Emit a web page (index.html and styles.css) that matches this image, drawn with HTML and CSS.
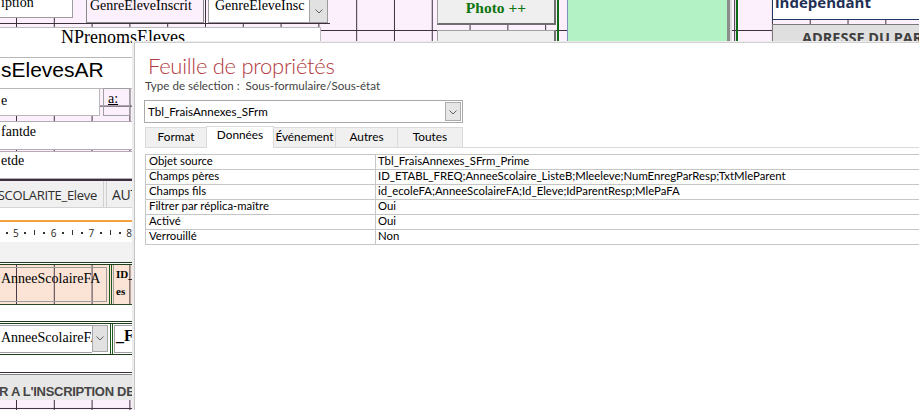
FILE: index.html
```html
<!DOCTYPE html>
<html lang="fr">
<head>
<meta charset="utf-8">
<title>Feuille de propriétés</title>
<link rel="stylesheet" href="styles.css">
</head>
<body>
<main class="designer">
  <div class="ctl txt-iption serif">iption</div>
  <div class="ctl rule-23"></div>
  <div class="ctl lbl-genre serif">GenreEleveInscrit</div>
  <div class="ctl cbo-genre serif"><span class="cbo-text">GenreEleveInsc</span><span class="dd"><svg viewBox="0 0 8 5" width="8" height="5"><path d="M0.5 0.5 L4 4 L7.5 0.5"/></svg></span></div>
  <div class="ctl txt-nprenoms serif">NPrenomsEleves</div>
  <div class="ctl btn-photo serif">Photo ++</div>
  <div class="ctl btn-fi serif">Fi</div>
  <div class="ctl vline-green v1"></div>
  <div class="ctl photo-frame"></div>
  <div class="ctl vline-green v2"></div>
  <div class="ctl txt-indep">independant</div>
  <div class="ctl lbl-adresse">ADRESSE DU PARENT</div>

  <div class="ctl txt-eleves">sElevesAR</div>
  <div class="ctl txt-e serif">e</div>
  <div class="ctl lbl-a serif"><u>a:</u></div>
  <div class="ctl txt-fantde serif">fantde</div>
  <div class="ctl txt-etde serif">etde</div>

  <div class="ctl lower">
    <div class="sect-line"></div>
    <div class="tabstrip">
      <span class="ttab first"><span>SCOLARITE_Eleve</span></span>
      <span class="ttab second"><span>AUTORISATION</span></span>
    </div>
    <div class="gap12"></div>
    <div class="orange"></div>
    <div class="ruler">
      <span class="rs"><i class="dot"></i></span>
      <span class="rs">5</span>
      <span class="rs"><i class="dot"></i></span>
      <span class="rs"><i class="tick"></i></span>
      <span class="rs"><i class="dot"></i></span>
      <span class="rs">6</span>
      <span class="rs"><i class="dot"></i></span>
      <span class="rs"><i class="tick"></i></span>
      <span class="rs"><i class="dot"></i></span>
      <span class="rs">7</span>
      <span class="rs"><i class="dot"></i></span>
      <span class="rs"><i class="tick"></i></span>
      <span class="rs"><i class="dot"></i></span>
      <span class="rs">8</span>
      <span class="rs"><i class="dot"></i></span>
    </div>
    <div class="ruler-pad"></div>
    <div class="sf-line"></div>
    <div class="sf-row1">
      <div class="sf-lbl serif">AnneeScolaireFA</div>
      <div class="sf-div"></div>
      <div class="sf-cell serif">ID_Fr<br>es</div>
    </div>
    <div class="sf-gap"></div>
    <div class="sf-line"></div>
    <div class="sf-row2">
      <div class="sf-cbo serif">AnneeScolaireFA</div>
      <div class="sf-dd"><svg viewBox="0 0 8 5" width="8" height="5"><path d="M0.5 0.5 L4 4 L7.5 0.5"/></svg></div>
      <div class="sf-div"></div>
      <div class="sf-cell2 serif">_Fr</div>
    </div>
    <div class="sf-gap2"></div>
    <div class="sf-bot"></div>
    <div class="bar-insc">R A L'INSCRIPTION DE</div>
  </div>
</main>

<section class="sheet">
  <h1 class="sheet-title">Feuille de propriétés</h1>
  <p class="sheet-sub">Type de sélection :&nbsp; Sous-formulaire/Sous-état</p>
  <div class="sel">
    <span class="sel-text">Tbl_FraisAnnexes_SFrm</span>
    <span class="sel-btn"><svg viewBox="0 0 8 5" width="8" height="5"><path d="M0.5 0.5 L4 4 L7.5 0.5"/></svg></span>
  </div>
  <div class="tabs">
    <span class="tab w-format">Format</span>
    <span class="tab on w-donnees">Données</span>
    <span class="tab w-event">Événement</span>
    <span class="tab w-autres">Autres</span>
    <span class="tab w-toutes">Toutes</span>
  </div>
  <div class="props">
    <div class="pn">Objet source</div><div class="pv">Tbl_FraisAnnexes_SFrm_Prime</div>
    <div class="pn">Champs pères</div><div class="pv">ID_ETABL_FREQ;AnneeScolaire_ListeB;Mleeleve;NumEnregParResp;TxtMleParent</div>
    <div class="pn">Champs fils</div><div class="pv">id_ecoleFA;AnneeScolaireFA;Id_Eleve;IdParentResp;MlePaFA</div>
    <div class="pn">Filtrer par réplica-maître</div><div class="pv">Oui</div>
    <div class="pn">Activé</div><div class="pv">Oui</div>
    <div class="pn">Verrouillé</div><div class="pv">Non</div>
  </div>
</section>
</body>
</html>
```

FILE: styles.css
```css
* { box-sizing: border-box; margin: 0; padding: 0; }
html, body { width: 919px; height: 410px; overflow: hidden; background: #fff; }
body { position: relative; }

.serif { font-family: "Liberation Serif", "Times New Roman", serif; }

/* ---------- design surface ---------- */
.designer {
  position: relative;
  width: 919px;
  height: 410px;
  overflow: hidden;
  background-color: #fdf0fd;
  background-image:
    linear-gradient(to right, #3d303d 0 1px, transparent 1px),
    linear-gradient(to bottom, #3d303d 0 1px, transparent 1px);
  background-size: 37.8px 37.8px;
  background-position: 16px 30px;
}
.ctl { position: absolute; white-space: nowrap; overflow: hidden; }

.txt-iption {
  left: -3px; top: -6px; width: 76px; height: 24px;
  background: #fff; border: 1px solid #9d9d9d;
  font-size: 14px; line-height: 16px; padding-left: 3px; color: #000;
}
.rule-23 { left: 0; top: 23px; width: 330px; height: 1px; background: #3d303d; }
.lbl-genre {
  left: 86px; top: -3px; width: 118px; height: 26px;
  border: 1px solid #8a8a8a; background: #fdf0fd;
  font-size: 14px; line-height: 16px; padding-left: 3px; color: #000;
}
.cbo-genre {
  left: 208px; top: -3px; width: 120px; height: 26px;
  background: #fff; border: 1px solid #9a9a9a;
  display: flex; font-size: 14px; line-height: 16px; color: #000;
}
.cbo-text { flex: 1; padding-left: 6px; overflow: hidden; }
.dd {
  width: 18px; background: #e1e1e1; border-left: 1px solid #a2a2a2;
  display: flex; align-items: center; justify-content: center; padding-top: 3px;
}
svg path { fill: none; stroke: #606060; stroke-width: 1; }

.txt-nprenoms {
  left: -3px; top: 27px; width: 324px; height: 50px;
  background: #fff; border: 1px solid #bcbcbc;
  font-size: 18px; line-height: 18px; padding-left: 63px; color: #000;
}
.btn-photo {
  left: 437px; top: -4px; width: 119px; height: 29px;
  background: #efefef;
  border: 1px solid #a0a0a0; border-right: 2px solid #6e6e6e; border-bottom: 2px solid #6e6e6e;
  font-size: 15.5px; font-weight: bold; color: #0f740f;
  line-height: 18px; padding-top: 2px; text-align: center;
}
.btn-fi {
  left: 437px; top: 30px; width: 119px; height: 30px;
  background: #efefef;
  border: 1px solid #a0a0a0; border-right: 2px solid #6e6e6e;
  font-size: 15.5px; font-weight: bold; color: #e00000;
  line-height: 18px; padding: 8px 0 0 30px;
}
.vline-green { top: 0; width: 2px; height: 42px; background: #0f6a14; }
.v1 { left: 557px; }
.v2 { left: 736px; }
.photo-frame {
  left: 567px; top: -2px; width: 163px; height: 46px;
  background: #b2f2c5;
  border-left: 1px solid #7f8fbf;
  border-right: 3px solid #8c8c8c;
  box-shadow: 2px 0 0 #dcdcdc;
}
.txt-indep {
  left: 772px; top: -8px; width: 150px; height: 28px;
  background: #fff; border: 1px solid #1f3864;
  font: bold 15px/18px "Open Sans", "DejaVu Sans", sans-serif;
  color: #1f2f55; padding-left: 2px;
}
.lbl-adresse {
  left: 772px; top: 24px; width: 150px; height: 30px;
  background: #dfdfdf; border: 1px solid #7a7a7a;
  font: bold 14.5px/18px "Open Sans", "DejaVu Sans", sans-serif;
  color: #404040; padding: 4px 0 0 29px;
}

.txt-eleves {
  left: -3px; top: 57px; width: 150px; height: 32px;
  background: #fff; border: 1px solid #b8b8b8;
  font: 21px/24px "Liberation Sans", Arial, sans-serif; color: #000;
  padding-left: 3px;
}
.txt-e {
  left: -3px; top: 88px; width: 103px; height: 28px;
  background: #fff; border: 1px solid #b8b8b8;
  font-size: 14px; line-height: 16px; padding: 4px 0 0 3px;
}
.lbl-a {
  left: 103px; top: 88px; width: 27px; height: 28px;
  border: 1px solid #a0a0a0;
  font-size: 14px; line-height: 16px; padding: 2px 0 0 4px;
}
.txt-fantde {
  left: -3px; top: 121px; width: 150px; height: 29px;
  background: #fff; border: 1px solid #b6aab6;
  font-size: 14px; line-height: 16px; padding: 2px 0 0 3px;
}
.txt-etde {
  left: -3px; top: 151px; width: 150px; height: 28px;
  background: #fff; border: 1px solid #b6aab6;
  font-size: 14px; line-height: 16px; padding: 1px 0 0 3px;
}

/* lower section (flow) */
.lower {
  left: 0; top: 179px; width: 140px;
  display: flex; flex-direction: column;
  background: #fff;
}
.sect-line { height: 2px; background: #3b2f3b; }
.tabstrip {
  height: 27px; background: #f0f0f0; border-bottom: 1px solid #d4d4d4;
  display: flex; overflow: hidden;
  font: 13px/20px "Open Sans", "Noto Sans", sans-serif; letter-spacing: -0.3px; color: #2e2e2e;
}
.ttab { display: flex; padding-top: 4px; white-space: nowrap; overflow: hidden; }
.ttab.first { width: 104px; flex: none; justify-content: flex-end; padding-right: 6px; border-right: 1px solid #d0d0d0; }
.ttab.second { margin-left: 2px; border-left: 1px solid #d0d0d0; padding-left: 5px; flex: none; width: 60px; font-size: 14px; }
.gap12 { height: 12px; }
.orange { height: 2px; background: #f5a33f; }
.ruler {
  height: 20px; display: flex; align-items: center; padding: 1px 0 0 1.8px;
  font: 10px/14px "Open Sans", "Noto Sans", sans-serif; color: #1e1e1e;
}
.rs { flex: none; width: 9.45px; display: flex; justify-content: center; align-items: center; }
.dot { width: 2px; height: 2px; background: #333; display: block; }
.tick { width: 1px; height: 5px; background: #333; display: block; }
.ruler-pad { height: 20px; background: #f2f2f2; }

.sf-line { height: 3px; border-top: 1px solid #1d3d1d; border-bottom: 1px solid #1d3d1d; }
.sf-row1 {
  height: 40px; display: flex;
  background-color: #fbe4d6;
  background-image: linear-gradient(to right, #4a3a4a 0 1px, transparent 1px);
  background-size: 37.8px 100%;
  background-position: 16px 0;
  border-bottom: 1px solid #2a4a2a;
}
.sf-lbl {
  margin: 2px 0 0 -2px; width: 109px; height: 35px; flex: none;
  border: 1px solid #9b9b9b;
  font-size: 14px; line-height: 16px; padding: 3px 0 0 2px;
  white-space: nowrap; overflow: hidden;
}
.sf-div { margin-left: 2px; width: 3px; flex: none; border-left: 1px solid #1d5a1d; border-right: 1px solid #1d5a1d; }
.sf-cell {
  margin-left: 1px; flex: 1; border-left: 1px solid #a0a0a0;
  padding: 1px 0 0 2px; font-size: 11px; line-height: 17px; font-weight: bold;
  white-space: nowrap; overflow: hidden;
}
.sf-gap { height: 16px; }
.sf-row2 { height: 31px; display: flex; border-bottom: 1px solid #1d3d1d; }
.sf-cbo {
  margin: 1px 0 0 -2px; width: 94px; height: 28px; flex: none;
  border: 1px solid #a0a0a0; border-right: none; background: #fff;
  font-size: 14px; line-height: 16px; padding: 4px 0 0 2px;
  white-space: nowrap; overflow: hidden;
}
.sf-dd {
  margin-top: 1px; width: 16px; height: 27px; flex: none;
  background: #e1e1e1; border: 1px solid #a6a6a6;
  display: flex; align-items: center; justify-content: center;
}
.sf-cell2 {
  margin: 1px 0 0 1px; flex: 1; height: 28px;
  border: 1px solid #a0a0a0; border-right: none; background: #fff;
  font-size: 16px; line-height: 18px; font-weight: bold; padding: 1px 0 0 1px;
  white-space: nowrap; overflow: hidden;
}
.sf-gap2 { height: 17px; }
.sf-bot { height: 2px; border-top: 1px solid #3b2f3b; }
.bar-insc {
  height: 26px; background: #e7e7e7; border-top: 1px solid #858585;
  font: bold 13px/16px "Liberation Sans", Arial, sans-serif; letter-spacing: -0.3px;
  color: #454545; padding-top: 9px; margin-left: -1px;
  white-space: nowrap; overflow: hidden;
}

/* ---------- property sheet ---------- */
.sheet {
  position: absolute; left: 134px; top: 42px; right: 0; bottom: 0;
  background: #fff;
  border-left: 1px solid #c6c6c6; border-top: 1px solid #d0d0d0;
  box-shadow: -2px -1px 0 #ececec;
  padding-left: 9px;
  overflow: hidden;
  font-family: Lato, "Open Sans", sans-serif;
  color: #000;
}
.sheet-title {
  margin: 10px 0 0 4px;
  font: 300 22px/25px Lato, "Open Sans", sans-serif;
  letter-spacing: -0.3px;
  color: #b2393d;
}
.sheet-sub { margin-left: 1px; font-size: 11.6px; line-height: 15px; color: #444; }
.sel {
  margin-top: 7px; width: 319px; height: 23px;
  border: 1px solid #a9a9a9; padding: 1px;
  display: flex; align-items: stretch;
}
.sel-text { flex: 1; font-size: 11.6px; line-height: 19px; padding-left: 2px; }
.sel-btn {
  width: 16px; background: #e6e6e6; border: 1px solid #adadad;
  display: flex; align-items: center; justify-content: center; padding-top: 1px;
}
.tabs {
  margin-top: 4px; margin-left: 1px; height: 21px;
  display: flex; align-items: flex-end;
  border-bottom: 1px solid #dadada;
}
.tab {
  height: 20px; margin-left: -1px;
  background: #f0f0f0; border: 1px solid #dadada; border-bottom: none;
  font-size: 11.8px; line-height: 18px; text-align: center; color: #000;
}
.tab:first-child { margin-left: 0; }
.tab.on { height: 22px; margin-bottom: -1px; background: #fff; line-height: 15px; position: relative; }
.w-format { width: 62px; }
.w-donnees { width: 68px; }
.w-event { width: 63px; }
.w-autres { width: 63px; }
.w-toutes { width: 66px; }

.props {
  margin: 6px 0 0 1px; width: 900px;
  display: grid; grid-template-columns: 230px 1fr;
  border-top: 1px solid #c6c6c6; border-left: 1px solid #c6c6c6;
  font-size: 11.35px;
}
.pn, .pv {
  height: 15px; border-bottom: 1px solid #c6c6c6;
  line-height: 12px; padding-bottom: 2px; white-space: nowrap; overflow: hidden;
}
.pn { padding-left: 3px; border-right: 1px solid #c6c6c6; }
.pv { padding-left: 2px; }
```
